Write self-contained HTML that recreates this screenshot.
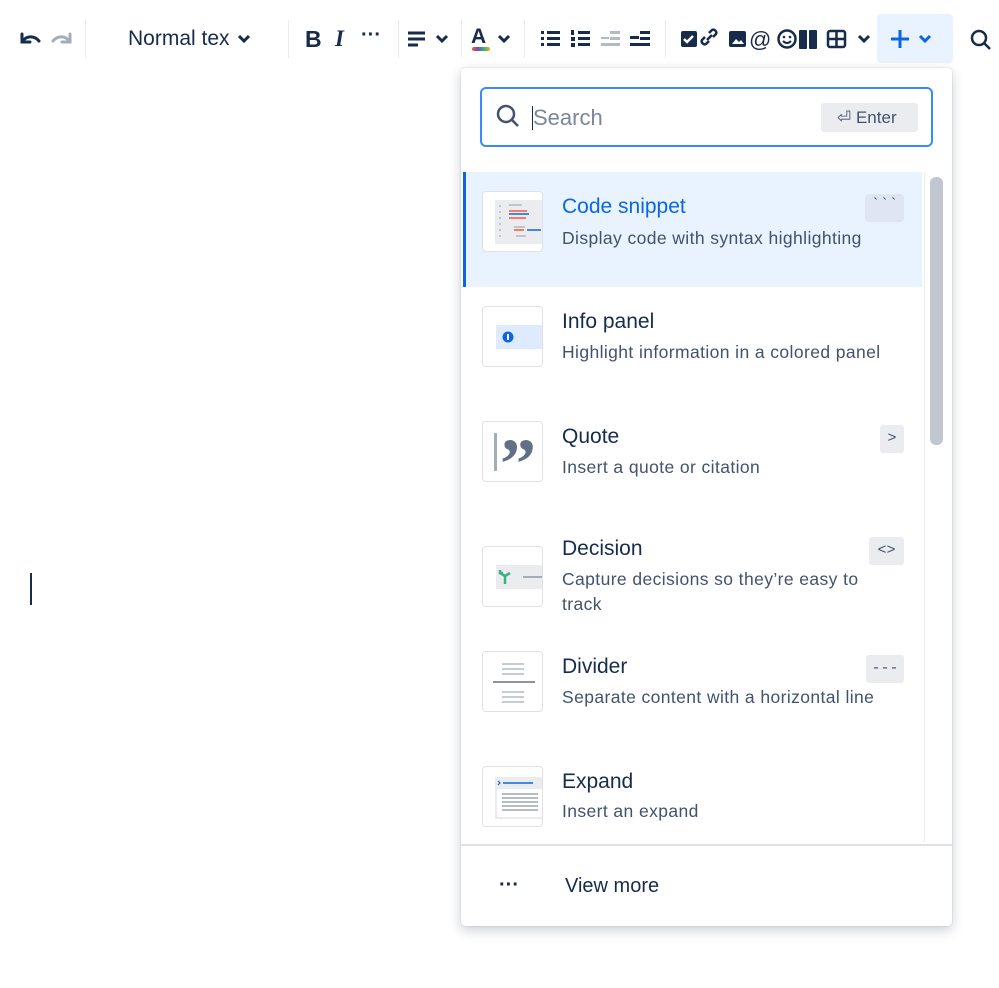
<!DOCTYPE html>
<html><head><meta charset="utf-8"><style>
*{margin:0;padding:0;box-sizing:border-box}
body{width:999px;height:988px;background:#fff;font-family:"Liberation Sans",sans-serif;color:#172b4d;position:relative;overflow:hidden}
.a{position:absolute}
.sep{position:absolute;top:20px;width:1px;height:38px;background:#ebecf0}
.menu{left:461px;top:68px;width:491px;height:858px;background:#fff;border-radius:4px;box-shadow:0 4px 12px rgba(9,30,66,.22),0 0 1px rgba(9,30,66,.3)}
.ic{position:absolute;left:482px;width:61px;height:61px;border:1px solid #dfe1e6;border-radius:4px;background:#fff;overflow:hidden}
.t{position:absolute;left:562px;font-size:21px;color:#172b4d}
.d{position:absolute;left:562px;font-size:17.5px;color:#42526e;letter-spacing:.4px;line-height:25px;width:340px}
.k{position:absolute;height:28px;background:#ebecf0;border-radius:3px;font-size:15px;color:#42526e;line-height:28px;text-align:center;font-family:"Liberation Mono",monospace}
</style></head><body>
<svg class="a" style="left:18px;top:28px" width="56" height="22" viewBox="0 0 56 22"><path d="M4 6v8h8M5 13c3-5 11-6 16 0" fill="none" stroke="#172b4d" stroke-width="3" stroke-linecap="round"/><path d="M52 6v8h-8M51 13c-3-5-11-6-16 0" fill="none" stroke="#a5adba" stroke-width="3" stroke-linecap="round"/></svg>
<div class="sep" style="left:85px"></div>
<div class="a" style="left:128px;top:27px;font-size:21px">Normal tex</div>
<svg class="a" style="left:237px;top:34px" width="14" height="10"><path d="M2 2l5 5 5-5" fill="none" stroke="#172b4d" stroke-width="3"/></svg>
<div class="sep" style="left:288px"></div>
<div class="a" style="left:305px;top:26px;font-size:23px;font-weight:bold">B</div>
<div class="a" style="left:335px;top:26px;font-size:23px;font-style:italic;font-family:'Liberation Serif',serif;font-weight:bold">I</div>
<div class="a" style="left:361px;top:24px;font-size:20px;font-weight:bold">···</div>
<div class="sep" style="left:398px"></div>
<svg class="a" style="left:407px;top:30px" width="45" height="18"><path d="M1 3h17M1 9h17M1 15h10" stroke="#172b4d" stroke-width="3"/><path d="M30 6l5 5 5-5" fill="none" stroke="#172b4d" stroke-width="3"/></svg>
<div class="sep" style="left:461px"></div>
<div class="a" style="left:471px;top:25px;font-size:21px;font-weight:bold">A</div>
<div class="a" style="left:472px;top:47px;width:18px;height:4px;background:linear-gradient(90deg,#ff5630,#6554c0,#36b37e,#ffab00);border-radius:2px"></div>
<svg class="a" style="left:497px;top:34px" width="14" height="10"><path d="M2 2l5 5 5-5" fill="none" stroke="#172b4d" stroke-width="3"/></svg>
<div class="sep" style="left:524px"></div>
<svg class="a" style="left:540px;top:29px" width="112" height="20"><g fill="#172b4d"><rect x="1" y="2" width="3" height="3"/><rect x="1" y="8" width="3" height="3"/><rect x="1" y="14" width="3" height="3"/><rect x="7" y="2" width="13" height="3"/><rect x="7" y="8" width="13" height="3"/><rect x="7" y="14" width="13" height="3"/><rect x="31" y="1" width="3" height="5"/><rect x="31" y="8" width="4" height="4"/><rect x="31" y="14" width="4" height="4"/><rect x="38" y="2" width="12" height="3"/><rect x="38" y="8" width="12" height="3"/><rect x="38" y="14" width="12" height="3"/></g><g fill="#b3bac5"><rect x="61" y="8" width="8" height="2"/><rect x="70" y="2" width="10" height="3"/><rect x="70" y="8" width="10" height="3"/><rect x="61" y="14" width="19" height="3"/></g><g fill="#172b4d"><rect x="90" y="7" width="9" height="3"/><rect x="100" y="2" width="10" height="3"/><rect x="100" y="8" width="10" height="3"/><rect x="90" y="14" width="20" height="3"/></g></svg>
<div class="sep" style="left:665px"></div>
<svg class="a" style="left:679px;top:28px" width="175" height="22"><rect x="2" y="3" width="16" height="16" rx="2" fill="#172b4d"/><path d="M5 11l3 3 6-6" fill="none" stroke="#fff" stroke-width="2.5"/><path d="M30 13l-3 3a3 3 0 0 1-4-4l3-3M34 9l3-3a3 3 0 0 0-4-4l-3 3M28 12l5-5" fill="none" stroke="#172b4d" stroke-width="2.5"/><rect x="50" y="3" width="17" height="16" rx="2" fill="#172b4d"/><path d="M53 16l4-5 3 3 2-2 3 4z" fill="#fff"/><text x="70" y="19" font-size="22" font-family="Liberation Sans" fill="#172b4d">@</text><circle cx="108" cy="11" r="8.5" fill="none" stroke="#172b4d" stroke-width="2.5"/><circle cx="105" cy="9" r="1.3" fill="#172b4d"/><circle cx="111" cy="9" r="1.3" fill="#172b4d"/><path d="M104 13q4 4 8 0" fill="none" stroke="#172b4d" stroke-width="2"/><rect x="120" y="2" width="8" height="19" rx="1" fill="#172b4d"/><rect x="130" y="2" width="8" height="19" rx="1" fill="#172b4d"/><rect x="149" y="3" width="17" height="16" rx="2" fill="none" stroke="#172b4d" stroke-width="2.5"/><path d="M157.5 3v16M149 11h17" stroke="#172b4d" stroke-width="2.5"/></svg>
<svg class="a" style="left:857px;top:34px" width="14" height="10"><path d="M2 2l5 5 5-5" fill="none" stroke="#172b4d" stroke-width="3"/></svg>
<div class="a" style="left:877px;top:14px;width:76px;height:49px;background:#e9f2ff;border-radius:4px"></div>
<svg class="a" style="left:890px;top:29px" width="45" height="20"><path d="M10 1v18M1 10h18" stroke="#0c66e4" stroke-width="3"/><path d="M30 7l5 5 5-5" fill="none" stroke="#0c66e4" stroke-width="3"/></svg>
<svg class="a" style="left:970px;top:29px" width="22" height="22"><circle cx="9" cy="9" r="7" fill="none" stroke="#172b4d" stroke-width="2.5"/><path d="M14 14l6 6" stroke="#172b4d" stroke-width="2.5"/></svg>
<div class="a" style="left:30px;top:573px;width:2px;height:32px;background:#172b4d"></div>
<div class="a menu"></div>
<div class="a" style="left:480px;top:87px;width:453px;height:60px;border:2px solid #388bff;border-radius:6px"></div>
<svg class="a" style="left:496px;top:104px" width="24" height="24"><circle cx="10" cy="10" r="8" fill="none" stroke="#42526e" stroke-width="2.5"/><path d="M16 16l6 6" stroke="#42526e" stroke-width="2.5"/></svg>
<div class="a" style="left:532px;top:106px;width:1px;height:24px;background:#172b4d"></div>
<div class="a" style="left:533px;top:105px;font-size:22px;color:#7a869a">Search</div>
<div class="a" style="left:821px;top:103px;width:97px;height:29px;background:#ebecf0;border-radius:3px;font-size:17px;color:#42526e;padding:5px 0 0 16px">⏎ Enter</div>
<div class="a" style="left:463px;top:172px;width:459px;height:115px;background:#e9f2ff"></div>
<div class="a" style="left:463px;top:172px;width:3px;height:115px;background:#0c66e4"></div>
<div class="a" style="left:930px;top:177px;width:13px;height:268px;background:#c1c7d0;border-radius:6px"></div>
<div class="a" style="left:924px;top:172px;width:1px;height:670px;background:#ebecf0"></div>

<div class="ic" style="top:191px"><svg width="61" height="61"><rect x="12" y="8" width="49" height="44" fill="#ebecf0"/><g stroke="#a5adba" stroke-width="1.2"><path d="M16 14h2M16 20h2M16 26h2M16 32h2M16 38h2M16 44h2M26 13h13M31 35h11M33 44h10"/></g><path d="M26 19h18M26 26h17M31 38h10" stroke="#ff5630" stroke-width="1.5"/><path d="M26 22h20M44 38h14" stroke="#0c66e4" stroke-width="1.5"/></svg></div>
<div class="t" style="top:195px;color:#0c66e4">Code snippet</div>
<div class="d" style="top:226px">Display code with syntax highlighting</div>
<div class="k" style="top:194px;width:39px;left:865px;background:#dfe6f2;line-height:22px">&#96;&#96;&#96;</div>

<div class="ic" style="top:306px"><svg width="61" height="61"><rect x="13" y="18" width="48" height="24" fill="#deebff"/><circle cx="25" cy="30" r="5.5" fill="#0c66e4"/><path d="M25 27v6" stroke="#fff" stroke-width="2"/></svg></div>
<div class="t" style="top:310px">Info panel</div>
<div class="d" style="top:340px">Highlight information in a colored panel</div>

<div class="ic" style="top:421px"><svg width="61" height="61"><rect x="11" y="11" width="3" height="38" fill="#a5adba"/><text x="17" y="66" font-size="72" font-weight="bold" font-family="Liberation Serif" fill="#626f86">”</text></svg></div>
<div class="t" style="top:425px">Quote</div>
<div class="d" style="top:455px">Insert a quote or citation</div>
<div class="k" style="top:425px;left:880px;width:24px">&gt;</div>

<div class="ic" style="top:546px"><svg width="61" height="61"><rect x="13" y="18" width="48" height="24" fill="#ebecf0"/><path d="M22 37v-8l-5-3M22 29l5-3M17 23v3h3" fill="none" stroke="#36b37e" stroke-width="2.5"/><path d="M40 30h21" stroke="#a5adba" stroke-width="2"/></svg></div>
<div class="t" style="top:537px">Decision</div>
<div class="d" style="top:567px;width:330px">Capture decisions so they’re easy to track</div>
<div class="k" style="top:537px;left:869px;width:35px">&lt;&gt;</div>

<div class="ic" style="top:651px"><svg width="61" height="61"><g stroke="#a5adba" stroke-width="1.2"><path d="M19 12h22M19 17h22M19 22h22M19 40h22M19 45h22M19 50h22"/></g><path d="M10 30h42" stroke="#8993a4" stroke-width="2"/></svg></div>
<div class="t" style="top:655px">Divider</div>
<div class="d" style="top:685px">Separate content with a horizontal line</div>
<div class="k" style="top:655px;left:866px;width:38px">---</div>

<div class="ic" style="top:766px"><svg width="61" height="61"><rect x="12" y="10" width="49" height="42" fill="#ebecf0"/><rect x="14" y="22" width="47" height="28" fill="#fff"/><path d="M15 14l2 2-2 2" fill="none" stroke="#0c66e4" stroke-width="1.2"/><path d="M20 16h30" stroke="#0c66e4" stroke-width="1.5"/><g stroke="#8993a4" stroke-width="1.2"><path d="M19 27h36M19 31h36M19 35h36M19 39h36M19 43h36"/></g></svg></div>
<div class="t" style="top:770px">Expand</div>
<div class="d" style="top:799px">Insert an expand</div>

<div class="a" style="left:461px;top:844px;width:491px;height:2px;background:#dfe1e6"></div>
<div class="a" style="left:499px;top:874px;font-size:20px;font-weight:bold">···</div>
<div class="a" style="left:565px;top:875px;font-size:20px">View more</div>
</body></html>
